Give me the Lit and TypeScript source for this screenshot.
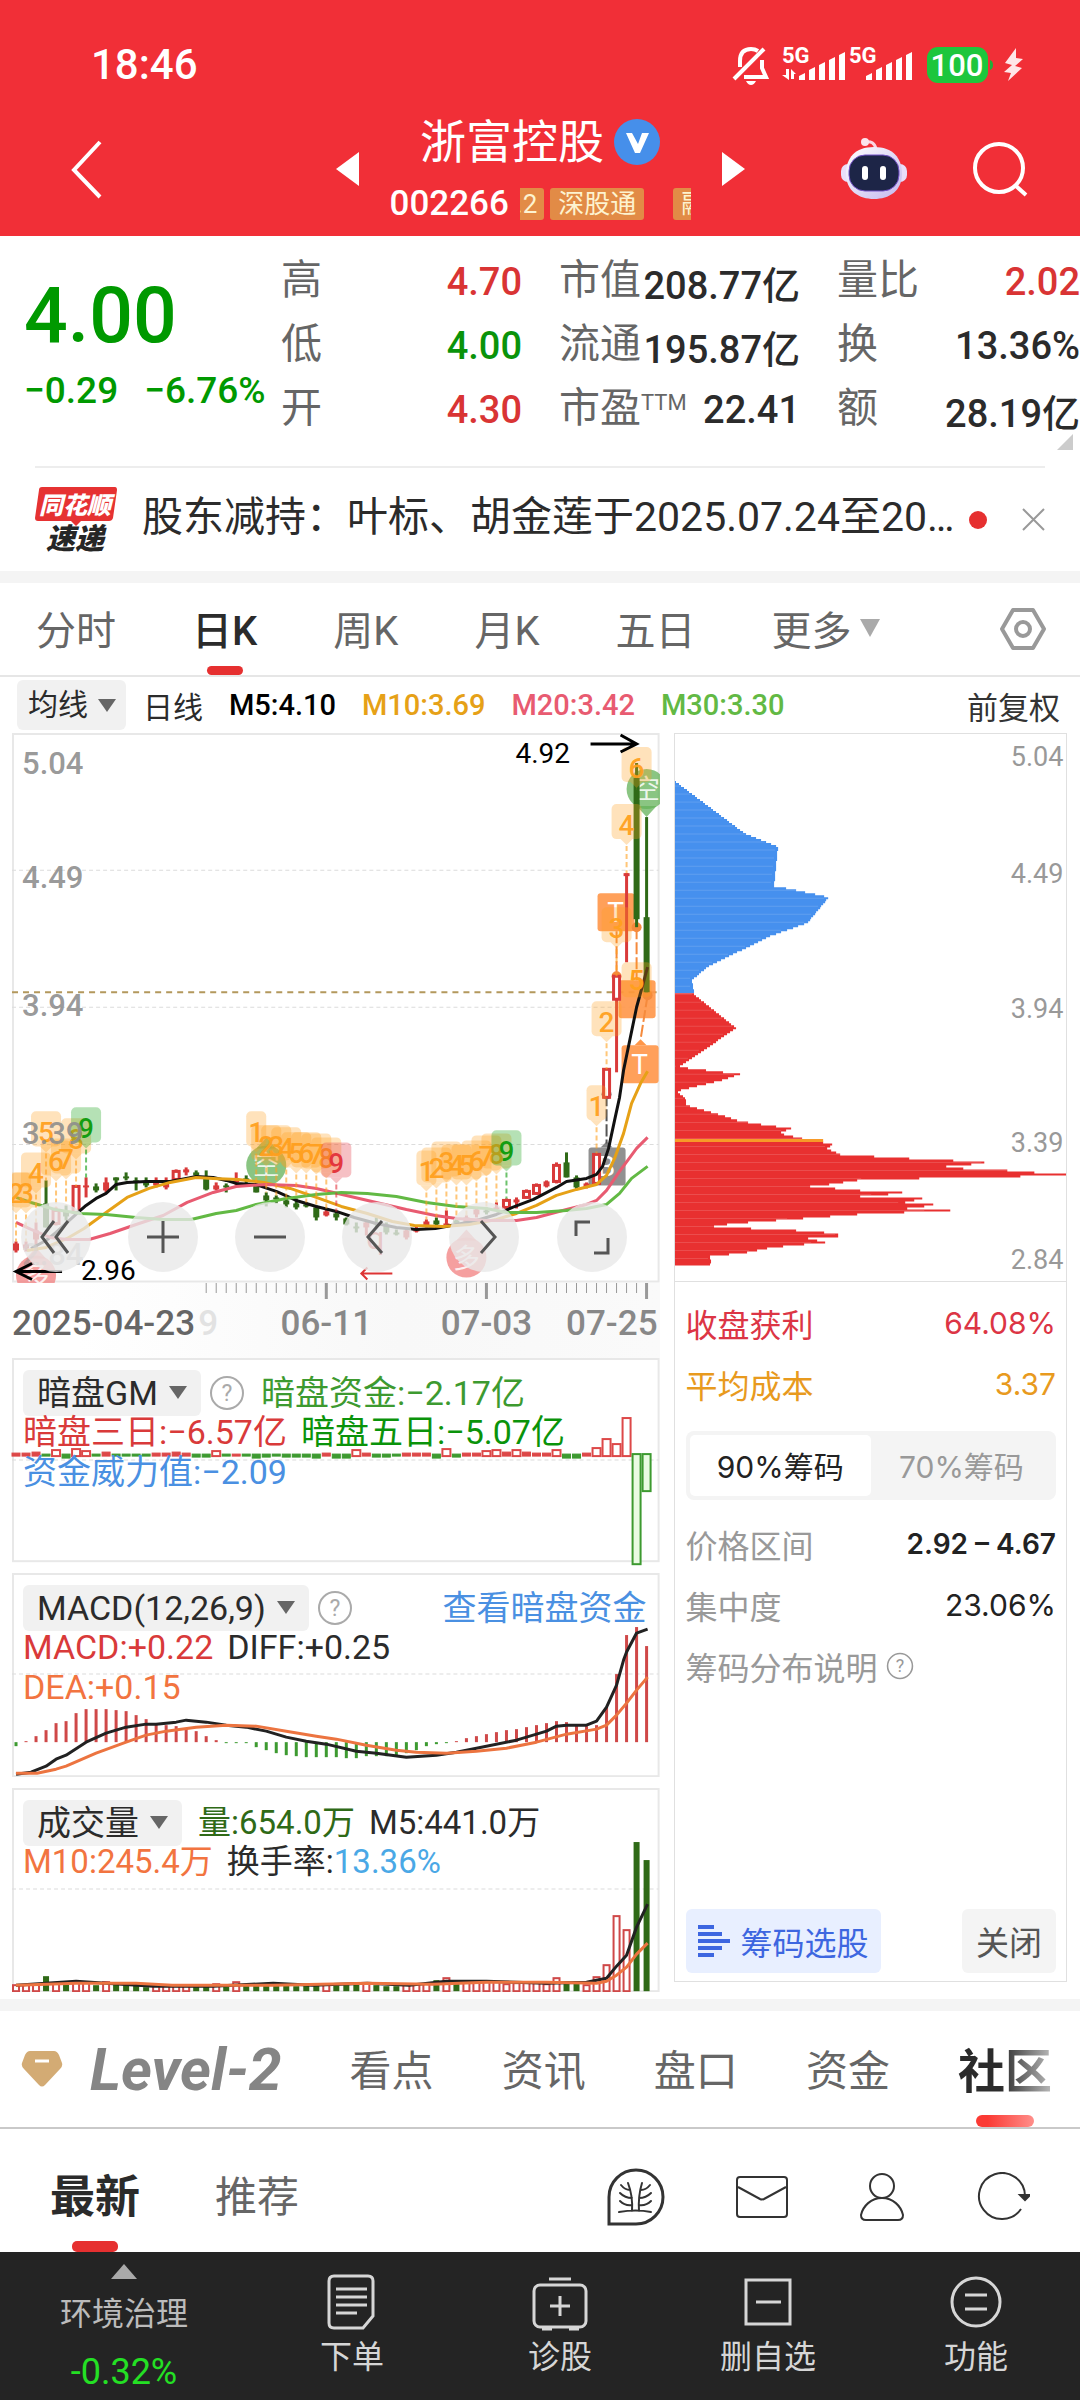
import { LitElement, html, svg, css } from "lit";
import { customElement } from "lit/decorators.js";
import { classMap } from "lit/directives/class-map.js";

const RED = "#d93a3a";
const GREEN = "#2f6a17";
const BAR_GREEN = "#3d9a30";

/** Distance between two trading days, and centre of the first one. */
const STEP = 10;
const FIRST = 4;
const dayX = (day: number) => FIRST + day * STEP;

/** r / g: direction, then wick top, wick bottom, body top, body bottom, hollow flag. */
type Candle = [string, number, number, number, number, number?];
const CANDLES: Candle[] = [
  ["r", 508, 519, 510, 517], ["r", 508, 518, 511, 515], ["r", 489, 517, 497, 506], ["g", 447, 494, 470, 494],
  ["r", 474, 492, 477, 490, 1], ["g", 472, 487, 478, 483], ["r", 453, 479, 453, 479, 1], ["r", 444, 464, 452, 454],
  ["g", 450, 459, 453, 457], ["r", 444, 459, 449, 457], ["g", 444, 457, 444, 447], ["g", 439, 447, 443, 445],
  ["g", 444, 457, 447, 449], ["g", 444, 454, 448, 452], ["r", 444, 454, 449, 452], ["r", 444, 456, 449, 454],
  ["r", 436, 447, 438, 446, 1], ["r", 434, 442, 436, 439], ["g", 437, 445, 439, 442], ["g", 437, 457, 444, 456],
  ["r", 449, 457, 452, 456], ["g", 450, 459, 452, 454], ["r", 439, 452, 447, 449], ["g", 442, 450, 445, 447],
  ["g", 450, 459, 452, 459], ["g", 459, 473, 462, 467], ["g", 462, 470, 464, 466], ["g", 465, 474, 467, 471],
  ["g", 465, 476, 470, 474], ["g", 469, 474, 471, 473], ["g", 472, 487, 474, 484], ["r", 475, 483, 478, 482],
  ["g", 478, 487, 480, 484], ["g", 484, 492, 485, 491], ["g", 489, 499, 493, 495], ["r", 487, 502, 489, 494],
  ["g", 484, 494, 489, 491], ["g", 489, 501, 491, 499], ["g", 496, 502, 499, 501], ["r", 495, 506, 497, 504],
  ["r", 492, 499, 495, 498], ["r", 486, 494, 488, 492], ["g", 484, 492, 487, 491], ["r", 477, 494, 490, 492],
  ["g", 485, 493, 487, 490], ["r", 482, 490, 484, 489], ["r", 474, 484, 476, 481], ["g", 474, 481, 477, 479],
  ["r", 469, 477, 474, 476], ["r", 465, 477, 467, 474, 1], ["r", 464, 475, 466, 469], ["r", 456, 465, 458, 464, 1],
  ["r", 450, 461, 452, 460, 1], ["r", 447, 454, 448, 453], ["r", 429, 450, 432, 448, 1], ["g", 419, 444, 429, 444],
  ["g", 442, 456, 444, 454], ["r", 449, 455, 450, 454], ["r", 420, 450, 421, 450, 1], ["r", 336, 364, 336, 364, 1],
  ["r", 243, 339, 243, 266, 1], ["r", 140, 229, 140, 143], ["g", 30, 194, 45, 186], ["g", 84, 259, 184, 259],
];

const MA5 = "19,515 34,507 44,499 54,490 66,479 74,472 84,465 94,460 104,451 115,449 134,448 158,448 174,445 184,443 201,444 214,447 224,450 243,451 264,458 284,467 304,473 324,478 342,484 364,490 384,494 404,496 423,495 444,491 464,487 484,481 500,474 521,466 544,454 554,448 574,445 584,441 590,433 596,415 602,387 607,364 611,337 624,274 635,234";
const MA10 = "15,517 34,514 55,505 72,495 94,479 115,464 137,455 158,449 184,444 201,445 226,446 252,449 278,455 304,464 329,473 355,480 380,488 402,492 431,493 457,491 484,486 504,480 524,472 544,462 564,456 584,451 594,442 602,425 611,400 619,370 628,350 635,338";
const MA20 = "4,489 19,496 38,504 55,506 77,506 98,500 124,491 151,482 175,469 201,459 224,453 254,451 284,452 304,455 334,462 364,469 394,476 423,482 444,485 474,487 504,487 524,484 554,476 574,471 584,467 594,457 607,438 624,415 635,404";
const MA30 = "4,464 19,469 43,476 68,480 94,481 124,484 151,486 179,486 204,480 224,477 244,471 274,465 304,461 329,459 355,460 384,463 414,469 444,473 474,475 494,479 524,479 554,477 574,475 594,471 607,460 619,445 635,433";

/** Nine-turn counters: day, top of the flag, caption, colour. */
type Flag = [number, number, string, string];
const O = "#ffa01e";
const FLAGS: Flag[] = [
  [0, 439, "2", O], [1, 439, "3", O], [2, 419, "4", O], [3, 378, "5", O], [4, 407, "6", O], [5, 405, "7", O], [6, 385, "8", O], [7, 374, "9", "#0a9a0a"],
  [24, 378, "1", O], [25, 392, "2", O], [26, 392, "3", O], [27, 394, "4", O], [28, 399, "5", O], [29, 399, "6", O], [30, 400, "7", O], [31, 404, "8", O], [32, 409, "9", "#e2303a"],
  [41, 417, "1", O], [42, 414, "2", O], [43, 408, "3", O], [44, 411, "4", O], [45, 411, "5", O], [46, 407, "6", O], [47, 402, "7", O], [48, 400, "8", O], [49, 397, "9", "#0a9a0a"],
  [58, 352, "1", O], [59, 268, "2", O], [60, 174, "3", O], [61, 71, "4", O], [62, 14, "6", O],
];

const FUND = [
  2, 2, 3, -1, 5, -3, 6, 4, -1, 3, -1, -1, -1, -1, 2, 2, 3, 2, -2, -2, 4, -1, 1, -1, -3, -2, -1, -2, -2, -2, -3, 2,
  -3, -3, 5, 2, -2, -2, -1, 2, 2, 2, -3, 6, -2, 2, 2, 4, 5, 3, 5, 3, 2, 2, 5, -3, -3, 2, 7, 16, 11, 37, -109, -36,
];
const MACD = [
  -4, 1, 6, 12, 19, 21, 29, 33, 33, 33, 32, 31, 27, 23, 18, 17, 16, 13, 11, 6, 2, -1, -1, -1, -5, -8, -11, -13, -14, -15, -15, -15,
  -15, -16, -16, -14, -14, -14, -13, -11, -8, -4, -2, -1, 1, 4, 6, 8, 10, 12, 13, 15, 17, 19, 21, 20, 17, 16, 17, 35, 68, 107, 115, 96,
];
const DIFF = "4,201 19,199 34,193 44,186 54,182 74,169 94,160 114,154 134,151 144,151 164,149 174,147 194,149 214,152 234,154 254,158 274,164 294,168 314,171 344,178 364,180 394,184 424,182 444,179 464,175 504,167 524,161 534,158 544,153 554,152 574,152 584,148 594,134 604,112 611,87 614,79 624,60 635,56";
const DEA = "4,200 25,200 44,196 54,193 84,180 114,169 134,162 154,158 184,154 214,152 244,153 274,158 304,163 324,166 354,172 384,177 404,179 434,180 464,178 494,175 524,169 554,161 584,156 594,152 604,142 614,130 624,117 635,104";

const VOLUME_SIDE = "rrrgrgrrgrggggrrrrggrgrggggggggrgggrgggrrrgrgrrrrrrrrrrggrrrrrgg";
const VOLUME = [
  6, 6, 7, 15, 8, 7, 9, 8, 6, 9, 7, 7, 7, 4, 6, 6, 6, 6, 6, 5, 7, 6, 9, 6, 7, 7, 6, 7, 5, 6, 7, 7,
  6, 7, 7, 8, 6, 5, 5, 7, 7, 7, 11, 13, 9, 10, 10, 9, 9, 7, 8, 8, 8, 7, 13, 10, 10, 6, 14, 26, 75, 61, 149, 131,
];
const VMA5 = "4,197 34,195 64,193 94,195 141,198 201,198 261,195 300,197 355,195 397,197 434,193 474,193 534,195 574,194 594,190 604,178 614,167 624,139 635,116";
const VMA10 = "4,197 34,196 64,195 124,195 160,197 261,197 355,195 420,196 474,194 534,194 584,195 594,193 604,187 614,179 624,166 635,155";

/** Chip distribution outline: vertical position, width. */
const CHIPS: [number, number][] = [
  [47, 1], [98, 69], [112, 103], [151, 99], [153, 111], [162, 154], [188, 132], [201, 95], [232, 32], [245, 17], [258, 19],
  [259, 19], [293, 61], [332, 4], [334, 22], [339, 65], [345, 47], [354, 10], [356, 2], [364, 11], [370, 11], [381, 50], [385, 62],
  [388, 79], [393, 116], [398, 104], [404, 132], [407, 148], [409, 157], [413, 152], [419, 165], [421, 199], [423, 234], [425, 278],
  [427, 309], [428, 309], [432, 258], [434, 318], [437, 359], [439, 392], [440, 392], [442, 298], [444, 189], [449, 154], [451, 135], [455, 185], [457, 227],
  [458, 227], [461, 185], [463, 247], [468, 226], [469, 258], [470, 258], [473, 232], [475, 275], [479, 182], [484, 115], [488, 59], [491, 39], [493, 76],
  [495, 121], [498, 163], [501, 163], [503, 133], [507, 150], [512, 97], [517, 72], [521, 35], [526, 36], [531, 34],
];
const CLOSE_Y = 259;

function chipWidth(y: number): number {
  for (let i = 1; i < CHIPS.length; i++) {
    const [y1, w1] = CHIPS[i];
    const [y0, w0] = CHIPS[i - 1];
    if (y <= y1) return Math.round(w0 + ((w1 - w0) * (y - y0)) / (y1 - y0));
  }
  return 0;
}

function chipPath(from: number, to: number): string {
  let d = `M0 ${from}`;
  for (let y = from; y < to; y += 2) d += `H${chipWidth(y)}V${Math.min(y + 2, to)}`;
  return d + "H0Z";
}

const line = (points: string, color: string, width = 3) =>
  svg`<polyline points=${points} fill="none" stroke=${color} stroke-width=${width} stroke-linejoin="round"></polyline>`;

const helpIcon = (size: number) => html`<svg width=${size} height=${size} viewBox="0 0 36 36" aria-hidden="true">
  <circle cx="18" cy="18" r="16" fill="none" stroke="currentColor" stroke-width="2"></circle>
  <text x="18" y="26" font-size="23" text-anchor="middle" fill="currentColor">?</text>
</svg>`;

const shared = css`
  :host { display: block; box-sizing: border-box; }
  *, *::before, *::after { box-sizing: border-box; }
  svg { display: block; flex: none; }
  button, select { font: inherit; color: inherit; background: none; border: 0; padding: 0; margin: 0; white-space: nowrap; }
  a { color: inherit; text-decoration: none; }
`;

@customElement("picker-pill")
class PickerPill extends LitElement {
  static properties = { label: {}, small: { type: Boolean } };
  declare label: string;
  declare small: boolean;
  static styles = [shared, css`
    .pill { display: grid; align-items: center; background: #f1f1f1; border-radius: 6px; color: #2b2b2b; font-size: 34px; height: 46px; }
    .pill.small { font-size: 30px; height: 50px; }
    select { grid-area: 1 / 1; appearance: none; height: 100%; padding: 0 43px 0 14px; line-height: 44px; }
    .small select { padding: 0 38px 0 11px; }
    .tri { grid-area: 1 / 1; justify-self: end; margin-right: 14px; border: 9px solid transparent; border-top: 13px solid #666; border-bottom: 0; pointer-events: none; }
    .small .tri { margin-right: 10px; }
  `];
  render() {
    return html`<div class=${classMap({ pill: true, small: this.small })}>
      <select aria-label=${this.label}><option>${this.label}</option></select><span class="tri"></span>
    </div>`;
  }
}

@customElement("stock-header")
class StockHeader extends LitElement {
  static styles = [shared, css`
    :host { background: #f12f37; color: #fff; }
    .status { display: flex; align-items: center; justify-content: space-between; height: 102px; padding: 28px 56px 0 91px; }
    .time { font-size: 42px; font-weight: 500; line-height: 50px; }
    .nav { display: grid; grid-template-columns: 1fr auto 1fr; align-items: center; height: 134px; }
    .back { justify-self: start; padding: 10px 40px 10px 69px; }
    .center { display: flex; align-items: center; gap: 31px; }
    .title { display: grid; justify-items: center; row-gap: 20px; width: 301px; padding-bottom: 3px; }
    .name { display: flex; align-items: center; gap: 10px; font-size: 46px; line-height: 52px; margin: 0; font-weight: 400; }
    .codes { display: flex; align-items: center; gap: 11px; width: 301px; height: 32px; font-size: 35px; font-weight: 500; }
    .tags { display: flex; flex: 1; overflow: hidden; gap: 6px; justify-content: flex-start; }
    .tag { flex: none; background: #e28b46; color: #fdf3d0; font-size: 26px; line-height: 32px; padding: 0 8px; border-radius: 3px; font-weight: 400; }
    .tag.first { padding: 0 7px 0 0; margin-left: -4px; border-radius: 0 3px 3px 0; }
    .tag.last { margin-left: 23px; }
    .right { display: flex; align-items: center; justify-content: flex-end; gap: 65px; padding-right: 52px; }
  `];
  render() {
    const bars = [28, 22, 17, 12, 7];
    return html`
      <div class="status">
        <span class="time">18:46</span>
        <svg width="292" height="40" viewBox="0 0 292 40" fill="#fff">
          <g fill="none" stroke="#fff" stroke-width="4">
            <path d="M2 34 32 4"></path>
            <path d="M8 22V16C8 8 12 4 19 4Q23 4 26 6M30 15V23L34 32H12"></path>
          </g>
          <path d="M14 36H24Q22 40 19 40T14 36Z"></path>
          <text x="50" y="18" font-size="22" font-weight="700">5G</text>
          <text x="117" y="18" font-size="22" font-weight="700">5G</text>
          <path d="M54 24H57V35L50 30H54ZM59 24 64 29H62V34H59Z"></path>
          ${bars.map((y, i) => svg`<path d="M${67 + i * 10} 35V${y + 3}L${73 + i * 10} ${y}V35ZM${134 + i * 10} 35V${y + 3}L${140 + i * 10} ${y}V35Z"></path>`)}
          <rect x="195" y="2" width="61" height="36" rx="11" fill="#1dc63c"></rect>
          <path d="M258 15Q261 16 261 20T258 25Z" fill="#1fae38"></path>
          <text x="225" y="31" font-size="31" font-weight="500" text-anchor="middle">100</text>
          <path d="M284 3 273 18 280 20 272 27 279 28 276 36 290 23 283 21 291 14 284 13Z" fill="#ffe6e8"></path>
        </svg>
      </div>
      <div class="nav">
        <button class="back" aria-label="返回">
          <svg width="34" height="60" viewBox="0 0 34 60" fill="none" stroke="#fff" stroke-width="4"><path d="M31 3 5 31 31 58"></path></svg>
        </button>
        <div class="center">
          <button aria-label="上一只"><svg width="23" height="34" viewBox="0 0 23 34"><path d="M23 0V34L0 17Z" fill="#fff"></path></svg></button>
          <div class="title">
            <h1 class="name">浙富控股
              <svg width="46" height="46" viewBox="0 0 46 46"><circle cx="23" cy="23" r="23" fill="#468fea"></circle><path d="M12 14H18L24 25 28 14H35L26 34H21Z" fill="#fff"></path></svg>
            </h1>
            <div class="codes"><span>002266</span>
              <div class="tags"><span class="tag first">.2</span><span class="tag">深股通</span><span class="tag last">融</span></div>
            </div>
          </div>
          <button aria-label="下一只"><svg width="23" height="34" viewBox="0 0 23 34"><path d="M0 0V34L23 17Z" fill="#fff"></path></svg></button>
        </div>
        <div class="right">
          <button aria-label="智能助手">
            <svg width="66" height="62" viewBox="0 0 66 62">
              <defs><linearGradient id="head" x1="0" y1="0" x2="1" y2="1"><stop offset="0" stop-color="#fff"></stop><stop offset="1" stop-color="#c4b8ee"></stop></linearGradient></defs>
              <rect x="0" y="26" width="66" height="18" rx="7" fill="#e9defa"></rect>
              <path d="M24 4Q33 2 35 11" fill="none" stroke="#fbd5e2" stroke-width="3"></path><circle cx="24" cy="4" r="4" fill="#fbe3ec"></circle>
              <path d="M33 9C52 9 61 20 61 36C61 53 48 61 33 61S5 53 5 36C5 20 14 9 33 9Z" fill="url(#head)"></path>
              <rect x="8" y="17" width="50" height="36" rx="16" fill="#1d2547" stroke="#7452c8" stroke-width="1"></rect>
              <rect x="21" y="28" width="6" height="14" rx="3" fill="#fff"></rect><rect x="39" y="28" width="6" height="14" rx="3" fill="#fff"></rect>
            </svg>
          </button>
          <button aria-label="搜索">
            <svg width="56" height="56" viewBox="0 0 56 56" fill="none" stroke="#fff" stroke-width="4"><circle cx="27" cy="27" r="24"></circle><path d="M44 45 54 54"></path></svg>
          </button>
        </div>
      </div>`;
  }
}

@customElement("quote-board")
class QuoteBoard extends LitElement {
  static styles = [shared, css`
    .board { display: grid; grid-template-columns: minmax(0, 220fr) minmax(0, 241fr) minmax(0, 241fr) minmax(0, 243fr); column-gap: 37px; padding: 14px 0 0 24px; height: 230px; }
    .last { padding-top: 22px; color: #009900; font-weight: 500; white-space: nowrap; }
    .price { font-size: 77px; line-height: 88px; }
    .change { display: flex; gap: 26px; font-size: 37px; line-height: 40px; margin-top: 11px; }
    dl { margin: 0; }
    .cell { display: flex; justify-content: space-between; align-items: center; height: 64px; font-size: 38px; white-space: nowrap; }
    dt { color: #666; font-size: 41px; line-height: 60px; padding-bottom: 4px; }
    dt sup { font-size: 22px; line-height: 0; vertical-align: 12px; }
    dd { margin: 0; color: #2b2b2b; font-weight: 500; }
    dd.up { color: #d93434; }
    dd.down { color: #0a930a; }
    .corner { border: 8px solid transparent; border-right-color: #ccc; border-bottom-color: #ccc; width: 0; margin: -8px 7px 0 auto; }
    .news { display: flex; align-items: center; height: 105px; margin: 0 35px; border-top: 2px solid #ededed; color: #2b2b2b; }
    .text { flex: 1; min-width: 0; margin: 0 8px 0 25px; padding-bottom: 6px; font-size: 41px; line-height: 60px; overflow: hidden; white-space: nowrap; }
    .dot { width: 18px; height: 18px; border-radius: 50%; background: #e63030; margin-right: 35px; }
    .band { height: 12px; background: #f4f4f4; }
  `];
  render() {
    const cell = (label: unknown, value: string, tone = "") => html`<div class="cell"><dt>${label}</dt><dd class=${tone}>${value}</dd></div>`;
    return html`
      <div class="board">
        <div class="last"><div class="price">4.00</div><div class="change"><span>−0.29</span><span>−6.76%</span></div></div>
        <dl>${cell("高", "4.70", "up")}${cell("低", "4.00", "down")}${cell("开", "4.30", "up")}</dl>
        <dl>${cell("市值", "208.77亿")}${cell("流通", "195.87亿")}${cell(html`市盈<sup>TTM</sup>`, "22.41")}</dl>
        <div><dl>${cell("量比", "2.02", "up")}${cell("换", "13.36%")}${cell("额", "28.19亿")}</dl><div class="corner"></div></div>
      </div>
      <div class="news">
        <svg width="82" height="66" viewBox="0 0 82 66" font-weight="900" font-style="italic">
          <path d="M7 0H80Q82 0 82 3L78 31Q77 34 74 34H46L41 39 36 34H3Q0 34 0 31L4 3Q4 0 7 0Z" fill="#e63232"></path>
          <text x="40" y="27" font-size="24" text-anchor="middle" fill="#fff">同花顺</text>
          <text x="40" y="62" font-size="29" text-anchor="middle" fill="#262626">速递</text>
        </svg>
        <a class="text" href="#news">股东减持：叶标、胡金莲于2025.07.24至20…</a>
        <span class="dot"></span>
        <button aria-label="关闭公告"><svg width="23" height="23" viewBox="0 0 23 23" stroke="#999" stroke-width="2"><path d="M1 1 22 22M22 1 1 22"></path></svg></button>
      </div>
      <div class="band"></div>`;
  }
}

@customElement("kline-chart")
class KlineChart extends LitElement {
  static styles = [shared, css`
    :host { position: relative; }
    .plot { width: 100%; height: auto; }
    .tools { position: absolute; left: 9px; right: 33px; bottom: 11px; display: flex; justify-content: space-between; }
    .tool { width: 70px; height: 70px; border-radius: 50%; background: rgba(232, 232, 232, 0.8); display: grid; place-items: center; }
  `];

  private candle([side, wickTop, wickBottom, top, bottom, hollow]: Candle, day: number) {
    const color = side === "r" ? RED : GREEN;
    const x = dayX(day);
    return svg`<path d="M${x} ${wickTop}V${wickBottom}" stroke=${color} stroke-width="3"></path>
      <rect x=${x - 3} y=${top} width="6" height=${Math.max(bottom - top, 2)} fill=${hollow ? "#fff" : color} stroke=${hollow ? color : "none"} stroke-width="3"></rect>`;
  }

  private flag([day, top, text, color]: Flag) {
    const x = dayX(day);
    const stem = Math.max(CANDLES[day][1], top + 42);
    const half = text === "1" ? 10 : 15;
    return svg`<path d="M${x} ${top + 42}V${stem}" stroke=${color} stroke-opacity=".6" stroke-width="2" stroke-dasharray="5 3"></path>
      <rect x=${x - half} y=${top} width=${half * 2} height="35" rx="5" fill=${color} fill-opacity=".3"></rect>
      <path d="M${x - 6} ${top + 35}H${x + 6}L${x} ${top + 41}Z" fill=${color} fill-opacity=".3"></path>
      <text x=${x} y=${top + 31} text-anchor="middle" font-size="28" font-weight="500" fill=${color} fill-opacity=".95">${text}</text>`;
  }

  render() {
    const balloon = (x: number, y: number, text: string, color: string, flip: number) => svg`
      <circle cx=${x} cy=${y} r="20" fill=${color} fill-opacity=".75"></circle>
      <path d="M${x - 10} ${y + 17 * flip}L${x} ${y + 28 * flip}L${x + 10} ${y + 17 * flip}Z" fill=${color} fill-opacity=".75"></path>
      <text x=${x} y=${y + 10} font-size="27" text-anchor="middle" fill="#fff" fill-opacity=".85">${text}</text>`;
    const trade = (x: number, y: number, text: string, color: string) => svg`
      <rect x=${x - 18} y=${y} width="37" height="38" rx="3" fill=${color} fill-opacity=".9"></rect>
      <text x=${x} y=${y + 29} font-size="28" text-anchor="middle" fill="#fff">${text}</text>`;
    return html`
      <svg class="plot" viewBox="0 0 647 549" role="img" aria-label="日K线图">
        <rect x="1" y="1" width="645" height="547" fill="none" stroke="#e8e8e8" stroke-width="2"></rect>
        <path d="M0 137H646M0 274H646M0 411H646" stroke="#dcdcdc" stroke-width="1" stroke-dasharray="4 3"></path>
        <path d="M0 259H646" stroke="#b3985c" stroke-width="2" stroke-dasharray="6 5"></path>
        ${balloon(24, 542, "多", "#f27f7f", -1)}
        ${balloon(454, 524, "多", "#f27f7f", -1)}
        ${balloon(634, 56, "空", "#63b158", 1)}
        ${balloon(254, 432, "空", "#63b158", -1)}
        ${trade(603, 160, "T", "#ff9648")}
        ${trade(624, 247, "", "#ff9648")}
        ${trade(627, 312, "T", "#ff9648")}
        ${trade(594, 414, "B", "#858585")}
        <path d="M622 312L628 306L634 312Z" fill="#ff9648"></path><path d="M588 414L594 408L600 414Z" fill="#858585"></path>
        <path d="M604 198V243M624 194V247M635 262L628 306" stroke="#f58a3c" stroke-width="2" stroke-dasharray="12 3"></path>
        <path d="M594 361V410" stroke="#555" stroke-width="2" stroke-dasharray="12 3"></path>
        <circle cx="604" cy="243" r="5" fill="#f58a3c"></circle><circle cx="624" cy="194" r="5" fill="#f58a3c"></circle>
        <circle cx="635" cy="262" r="5" fill="#f58a3c"></circle><circle cx="594" cy="361" r="5" fill="#777"></circle>
        ${CANDLES.map((c, i) => this.candle(c, i))}
        ${line(MA5, "#111")}${line(MA10, "#e6a117")}${line(MA20, "#e85b71")}${line(MA30, "#62b944")}
        ${FLAGS.map((f) => this.flag(f))}
        <rect x="609" y="229" width="30" height="35" rx="5" fill="#ffa01e" fill-opacity=".3"></rect>
        <text x="624" y="257" font-size="28" font-weight="500" text-anchor="middle" fill="#ffa01e">5</text>
        <g font-size="31" font-weight="500" fill="#8c8c8c" fill-opacity=".9">
          <text x="10" y="41">5.04</text><text x="10" y="155">4.49</text><text x="10" y="283">3.94</text>
          <text x="10" y="411">3.39</text><text x="10" y="532" fill-opacity=".5">2.84</text>
        </g>
        <g font-size="28" fill="#000"><text x="503" y="30">4.92</text><text x="69" y="546">2.96</text></g>
        <g fill="none" stroke="#000" stroke-width="3">
          <path d="M578 11H624M608 2 624 11 608 19"></path><path d="M50 538H4M20 530 4 538 20 546"></path>
        </g>
        <text x="363" y="516" font-size="32" text-anchor="middle" fill="#dd4848">q</text>
        <path d="M380 540H349M355 534 349 540 355 546" fill="none" stroke="#dd3434" stroke-width="2"></path>
      </svg>
      <div class="tools">
        ${[
          ["后退", "M18 4 6 20 18 36M32 4 20 20 32 36"],
          ["放大", "M4 20H36M20 4V36"],
          ["缩小", "M4 20H36"],
          ["左移", "M25 4 11 20 25 36"],
          ["右移", "M17 4 31 20 17 36"],
          ["全屏", "M4 19V5H18M36 21V36H22"],
        ].map(([name, d]) => html`<button class="tool" aria-label=${name}>
          <svg width="40" height="40" viewBox="0 0 40 40" fill="none" stroke="#555" stroke-width="3"><path d=${d}></path></svg>
        </button>`)}
      </div>`;
  }
}

@customElement("date-axis")
class DateAxis extends LitElement {
  static styles = [shared, css`
    :host { background: linear-gradient(90deg, #fff 0%, #fff 10%, #f8f8f8 60%, #fafafa 100%); }
    svg { width: 100%; height: auto; }
  `];
  render() {
    const days = Array.from({ length: 45 }, (_, i) => i + 19);
    return html`<svg viewBox="0 0 647 75" font-size="35" font-weight="500" fill="#888">
      ${days.map((d) => {
        const major = d === 31 || d === 47 || d === 63;
        return svg`<path d="M${dayX(d)} 0V${major ? 16 : 10}" stroke="#999" stroke-width=${major ? 3 : 1}></path>`;
      })}
      <text x="186" y="52" fill="#e2e2e2">9</text>
      <text x="0" y="52" fill="#666">2025-04-23</text>
      <text x="314" y="52" text-anchor="middle">06-11</text>
      <text x="474" y="52" text-anchor="middle">07-03</text>
      <text x="645" y="52" text-anchor="end">07-25</text>
    </svg>`;
  }
}

@customElement("indicator-panels")
class IndicatorPanels extends LitElement {
  static styles = [shared, css`
    :host { display: grid; row-gap: 11px; }
    .panel { display: grid; }
    .plot { grid-area: 1 / 1; width: 100%; height: auto; }
    .legend { grid-area: 1 / 1; padding: 12px 13px 0 11px; font-size: 34px; white-space: nowrap; z-index: 1; }
    .row { display: flex; align-items: center; gap: 14px; line-height: 40px; }
    .row.head { height: 46px; margin-bottom: -4px; gap: 8px; }
    .q { color: #aaa; }
    .head .value { margin-left: 8px; }
    .head .value + .value { margin-left: 6px; }
    .volume { font-size: 33px; }
    .link { margin-left: auto; color: #4a90e2; }
    .green { color: #3d9a30; } .strong { color: #0a930a; } .red { color: #d93a3a; } .blue { color: #4a90e2; }
    .sky { color: #4aa8e6; } .orange { color: #f27440; } .dark { color: #2b2b2b; } .forest { color: #2f6a17; }
  `];
  render() {
    const frame = (mid: number) => svg`<rect x="1" y="1" width="645" height="202" fill="none" stroke="#e8e8e8" stroke-width="2"></rect>
      <path d="M0 ${mid}H646" stroke="#dcdcdc" stroke-dasharray="4 3"></path>`;
    return html`
      <section class="panel">
        <svg class="plot" viewBox="0 0 647 204" overflow="visible">${frame(102)}
          ${FUND.map((v, i) => {
            const color = v > 0 ? "#dd4848" : BAR_GREEN;
            const x = dayX(i) - 4;
            const big = Math.abs(v) > 3;
            return svg`<rect x=${x} y=${v > 0 ? 97 - v : 96} width="8" height=${Math.abs(v) + 1} fill=${big ? (v > 0 ? "#fff" : "#e9fbe2") : color} stroke=${color} stroke-width=${big ? 2 : 1}></rect>`;
          })}
        </svg>
        <div class="legend">
          <div class="row head"><picker-pill label="暗盘GM"></picker-pill><button class="q" aria-label="暗盘说明">${helpIcon(36)}</button><span class="value green">暗盘资金:−2.17亿</span></div>
          <div class="row"><span class="red">暗盘三日:−6.57亿</span><span class="strong">暗盘五日:−5.07亿</span></div>
          <div class="row"><span class="blue">资金威力值:−2.09</span></div>
        </div>
      </section>
      <section class="panel">
        <svg class="plot" viewBox="0 0 647 204">${frame(101)}
          ${MACD.map((v, i) => svg`<path d="M${dayX(i)} 169V${169 - v}" stroke=${v > 0 ? "#cf4848" : BAR_GREEN} stroke-width="3"></path>`)}
          ${line(DIFF, "#222")}${line(DEA, "#ec7440")}
        </svg>
        <div class="legend">
          <div class="row head"><picker-pill label="MACD(12,26,9)"></picker-pill><button class="q" aria-label="MACD说明">${helpIcon(36)}</button><a class="link" href="#fund">查看暗盘资金</a></div>
          <div class="row"><span class="red">MACD:+0.22</span><span class="dark">DIFF:+0.25</span></div>
          <div class="row"><span class="orange">DEA:+0.15</span></div>
        </div>
      </section>
      <section class="panel">
        <svg class="plot" viewBox="0 0 647 204">${frame(101)}
          ${VOLUME.map((v, i) => {
            const up = VOLUME_SIDE[i] === "r";
            return svg`<rect x=${dayX(i) - 3} y=${203 - v} width="6" height=${v} fill=${up ? "#fff" : GREEN} stroke=${up ? "#cf4848" : "none"} stroke-width="2"></rect>`;
          })}
          ${line(VMA5, "#222")}${line(VMA10, "#ec7440")}
        </svg>
        <div class="legend volume">
          <div class="row head"><picker-pill label="成交量"></picker-pill><span class="value forest">量:654.0万</span><span class="value dark">M5:441.0万</span></div>
          <div class="row"><span class="orange">M10:245.4万</span><span class="dark">换手率:<span class="sky">13.36%</span></span></div>
        </div>
      </section>`;
  }
}

@customElement("chip-panel")
class ChipPanel extends LitElement {
  static styles = [shared, css`
    :host { display: flex; flex-direction: column; border: 1px solid #e0e0e0; margin-bottom: 10px; }
    .plot { width: 100%; height: auto; border-bottom: 1px solid #e0e0e0; }
    .info { flex: 1; display: flex; flex-direction: column; padding: 11px 10px 8px 11px; font-size: 32px; }
    .row { display: flex; justify-content: space-between; align-items: center; height: 61px; color: #999; white-space: nowrap; }
    .num { font-family: Inter, "Noto Sans CJK SC", sans-serif; font-size: 30px; color: #222; }
    .num.bold { font-size: 28px; font-weight: 600; }
    .row.red, .red .num { color: #dc3545; }
    .row.gold, .gold .num { color: #e89a1e; }
    .switch { display: flex; height: 69px; margin: 16px 0 14px; padding: 4px; background: #f4f4f4; border-radius: 8px; font-family: Inter, "Noto Sans CJK SC", sans-serif; font-size: 30px; }
    .switch button { flex: 1; border-radius: 5px; color: #999; }
    .switch .on { background: #fff; color: #222; }
    .note { justify-content: flex-start; gap: 8px; }
    .foot { display: flex; justify-content: space-between; margin-top: auto; }
    .pick { display: flex; align-items: center; gap: 11px; height: 64px; padding: 0 12px; border-radius: 6px; background: #e8efff; color: #3d66e0; font-size: 32px; }
    .close { height: 64px; padding: 0 14px; border-radius: 6px; background: #f4f4f4; color: #555; font-size: 33px; }
  `];
  render() {
    const stripes = Array.from({ length: 60 }, (_, i) => 52 + i * 8);
    const labels: [number, string][] = [[32, "5.04"], [149, "4.49"], [284, "3.94"], [418, "3.39"], [534, "2.84"]];
    return html`
      <svg class="plot" viewBox="0 0 391 546" role="img" aria-label="筹码分布">
        <path d=${chipPath(47, CLOSE_Y)} fill="#4690ee"></path>
        <path d=${chipPath(CLOSE_Y, 531)} fill="#e83030"></path>
        ${stripes.map((y) => svg`<path d="M0 ${y}H${Math.max(chipWidth(y) - 3, 0)}" stroke="#fff" stroke-opacity=".14"></path>`)}
        <path d="M0 406H148" stroke="#f79a28" stroke-width="3"></path>
        <g font-size="27" fill="#999" text-anchor="end">${labels.map(([y, t]) => svg`<text x="388" y=${y}>${t}</text>`)}</g>
      </svg>
      <div class="info">
        <div class="row red"><span>收盘获利</span><span class="num">64.08%</span></div>
        <div class="row gold"><span>平均成本</span><span class="num">3.37</span></div>
        <div class="switch"><button class="on">90%筹码</button><button>70%筹码</button></div>
        <div class="row"><span>价格区间</span><span class="num bold">2.92 – 4.67</span></div>
        <div class="row"><span>集中度</span><span class="num">23.06%</span></div>
        <div class="row note"><span>筹码分布说明</span><button aria-label="筹码分布说明">${helpIcon(28)}</button></div>
        <div class="foot">
          <button class="pick"><svg width="32" height="32" viewBox="0 0 32 32" stroke="currentColor" stroke-width="4"><path d="M0 2H16M0 9H24M0 16H32M0 23H24M0 30H16"></path></svg>筹码选股</button>
          <button class="close">关闭</button>
        </div>
      </div>`;
  }
}

@customElement("app-root")
class AppRoot extends LitElement {
  static styles = [shared, css`
    :host { display: flex; flex-direction: column; min-height: 100vh; background: #fff; overflow: hidden; font-family: Roboto, "Noto Sans CJK SC", sans-serif; }
    .periods { display: flex; align-items: center; gap: 76px; height: 94px; padding: 0 34px 0 36px; border-bottom: 2px solid #e6e6e6; color: #666; font-size: 40px; }
    .period, .topic, .feed-tab { position: relative; height: 100%; padding-bottom: 2px; }
    .period.on { color: #2b2b2b; font-weight: 500; }
    .on::after { content: ""; position: absolute; left: 50%; bottom: 0; width: 36px; height: 9px; margin-left: -18px; border-radius: 5px; background: #e63030; }
    .more { display: flex; align-items: center; gap: 8px; }
    .tri { border: 10px solid transparent; border-top: 18px solid #aaa; border-bottom: 0; }
    .gear { margin-left: auto; }
    .averages { display: flex; align-items: center; gap: 26px; height: 56px; padding: 0 20px 0 17px; font-size: 29px; font-weight: 500; white-space: nowrap; }
    .day { margin-left: -9px; font-weight: 400; font-size: 30px; color: #2b2b2b; }
    .averages picker-pill { font-weight: 400; }
    .m10 { color: #e6a117; } .m20 { color: #e85b71; } .m30 { color: #62b944; }
    .adjust { margin-left: auto; font-weight: 400; font-size: 31px; color: #333; }
    .charts { display: grid; grid-template-columns: 647fr 393fr; column-gap: 14px; padding: 0 13px 7px 12px; }
    .band { height: 12px; background: #f4f4f4; }
    .topics { display: flex; align-items: center; justify-content: space-between; height: 118px; padding: 0 28px 0 21px; border-bottom: 2px solid #c9c9c9; color: #666; font-size: 42px; }
    .level { display: flex; align-items: center; gap: 27px; font-size: 59px; font-weight: 700; font-style: italic; color: #858585; }
    .topic { padding-bottom: 4px; }
    .topic.on { font-size: 47px; font-weight: 700; }
    .fade { background: linear-gradient(90deg, #2b2b2b 45%, #bbb); background-clip: text; -webkit-background-clip: text; color: transparent; }
    .topic.on::after { width: 58px; height: 12px; margin-left: -29px; border-radius: 6px; background: linear-gradient(90deg, #fb3a34 20%, #ff8f8b); }
    .feed { display: flex; align-items: center; gap: 75px; height: 123px; padding: 0 50px 0 50px; font-size: 42px; color: #666; }
    .feed-tab { padding: 5px 0 0; }
    .feed-tab.on { font-size: 45px; font-weight: 700; color: #2b2b2b; }
    .feed-tab.on::after { width: 46px; height: 11px; margin-left: -23px; }
    .tools { margin-left: auto; padding-top: 12px; display: flex; align-items: center; gap: 71px; color: #333; }
    .bar { flex: 1; display: grid; grid-template-columns: 248fr 208fr 208fr 208fr 208fr; background: #242424; color: #d6d6d6; font-size: 32px; min-height: 149px; }
    .sector { display: flex; flex-direction: column; align-items: center; padding-top: 12px; line-height: 46px; color: #bbb; }
    .up { border: 13px solid transparent; border-top: 0; border-bottom: 15px solid #aaa; margin-bottom: 12px; }
    .down { margin-top: 12px; font-size: 36px; color: #24e024; }
    .action { display: flex; flex-direction: column; align-items: center; justify-content: flex-start; gap: 2px; padding-top: 20px; line-height: 46px; }
  `];
  render() {
    const actions: [string, unknown][] = [
      ["下单", svg`<path d="M10 4H44Q49 4 49 9V44L39 56H10Q5 56 5 51V9Q5 4 10 4Z"></path><path d="M12 17H43M12 25H43M12 33H43M12 41H33"></path>`],
      ["诊股", svg`<rect x="2" y="13" width="52" height="42" rx="6"></rect><path d="M17 7H39M28 24V44M18 34H38M10 57H20M37 57H47"></path>`],
      ["删自选", svg`<rect x="6" y="8" width="44" height="44"></rect><path d="M16 30H41"></path>`],
      ["功能", svg`<circle cx="28" cy="30" r="24"></circle><path d="M17 23H39M17 37H39"></path>`],
    ];
    return html`
      <stock-header></stock-header>
      <quote-board></quote-board>
      <nav class="periods">
        <button class="period">分时</button><button class="period on">日K</button><button class="period">周K</button>
        <button class="period">月K</button><button class="period">五日</button>
        <button class="period more">更多<span class="tri"></span></button>
        <button class="gear" aria-label="设置">
          <svg width="46" height="46" viewBox="0 0 46 46" fill="none" stroke="#999" stroke-width="4" stroke-linejoin="round"><path d="M13 4H33L44 23 33 42H13L2 23Z"></path><circle cx="23" cy="23" r="7"></circle></svg>
        </button>
      </nav>
      <div class="averages">
        <picker-pill small label="均线"></picker-pill><span class="day">日线</span><span>M5:4.10</span>
        <span class="m10">M10:3.69</span><span class="m20">M20:3.42</span><span class="m30">M30:3.30</span>
        <button class="adjust">前复权</button>
      </div>
      <main class="charts">
        <div><kline-chart></kline-chart><date-axis></date-axis><indicator-panels></indicator-panels></div>
        <chip-panel></chip-panel>
      </main>
      <div class="band"></div>
      <nav class="topics">
        <button class="level">
          <svg width="42" height="36" viewBox="0 0 42 36"><path d="M9 0H33Q36 0 38 4L41 12Q42 15 39 18L24 34Q21 37 18 34L3 18Q0 15 1 12L4 4Q6 0 9 0Z" fill="#d3ab74"></path><path d="M14 10H28" stroke="#fff" stroke-width="3"></path></svg>
          <span>Level-2</span>
        </button>
        <button class="topic">看点</button><button class="topic">资讯</button><button class="topic">盘口</button><button class="topic">资金</button>
        <button class="topic on"><span class="fade">社区</span></button>
      </nav>
      <div class="feed">
        <button class="feed-tab on">最新</button><button class="feed-tab">推荐</button>
        <div class="tools">
          <button aria-label="韭菜圈">
            <svg width="58" height="58" viewBox="0 0 58 58" fill="none" stroke="currentColor" stroke-width="3" stroke-linecap="round">
              <path d="M2 56V29A27 27 0 1 1 29 56Z"></path>
              <path stroke-width="2" d="M21 15Q26 28 25 43M35 15Q31 28 32 43M12 44Q29 41 44 44M14 17Q18 22 23 22M13 25Q18 30 25 30M13 33Q18 38 25 37M43 17Q39 22 34 22M44 25Q39 30 32 30M44 33Q39 38 32 37"></path>
            </svg>
          </button>
          <button aria-label="消息">
            <svg width="52" height="42" viewBox="0 0 52 42" fill="none" stroke="currentColor" stroke-width="2"><rect x="1" y="1" width="50" height="40" rx="3"></rect><path d="M2 11 24 23Q26 24 28 23L50 11"></path></svg>
          </button>
          <button aria-label="我的">
            <svg width="46" height="50" viewBox="0 0 46 50" fill="none" stroke="currentColor" stroke-width="2"><circle cx="23" cy="14" r="12"></circle><path d="M23 26C34 26 42 34 44 43Q44 48 39 48H7Q2 48 2 43C4 34 12 26 23 26Z"></path></svg>
          </button>
          <button aria-label="刷新">
            <svg width="54" height="50" viewBox="0 0 54 50" fill="none" stroke="currentColor" stroke-width="2"><path d="M45 37A23 23 0 1 1 49 24"></path><path d="M44 23H54L49 28Z" fill="currentColor"></path></svg>
          </button>
        </div>
      </div>
      <footer class="bar">
        <button class="sector"><span class="up"></span><span>环境治理</span><span class="down">-0.32%</span></button>
        ${actions.map(([name, icon]) => html`<button class="action">
          <svg width="56" height="60" viewBox="0 0 56 60" fill="none" stroke="#d6d6d6" stroke-width="3">${icon}</svg><span>${name}</span>
        </button>`)}
      </footer>`;
  }
}
